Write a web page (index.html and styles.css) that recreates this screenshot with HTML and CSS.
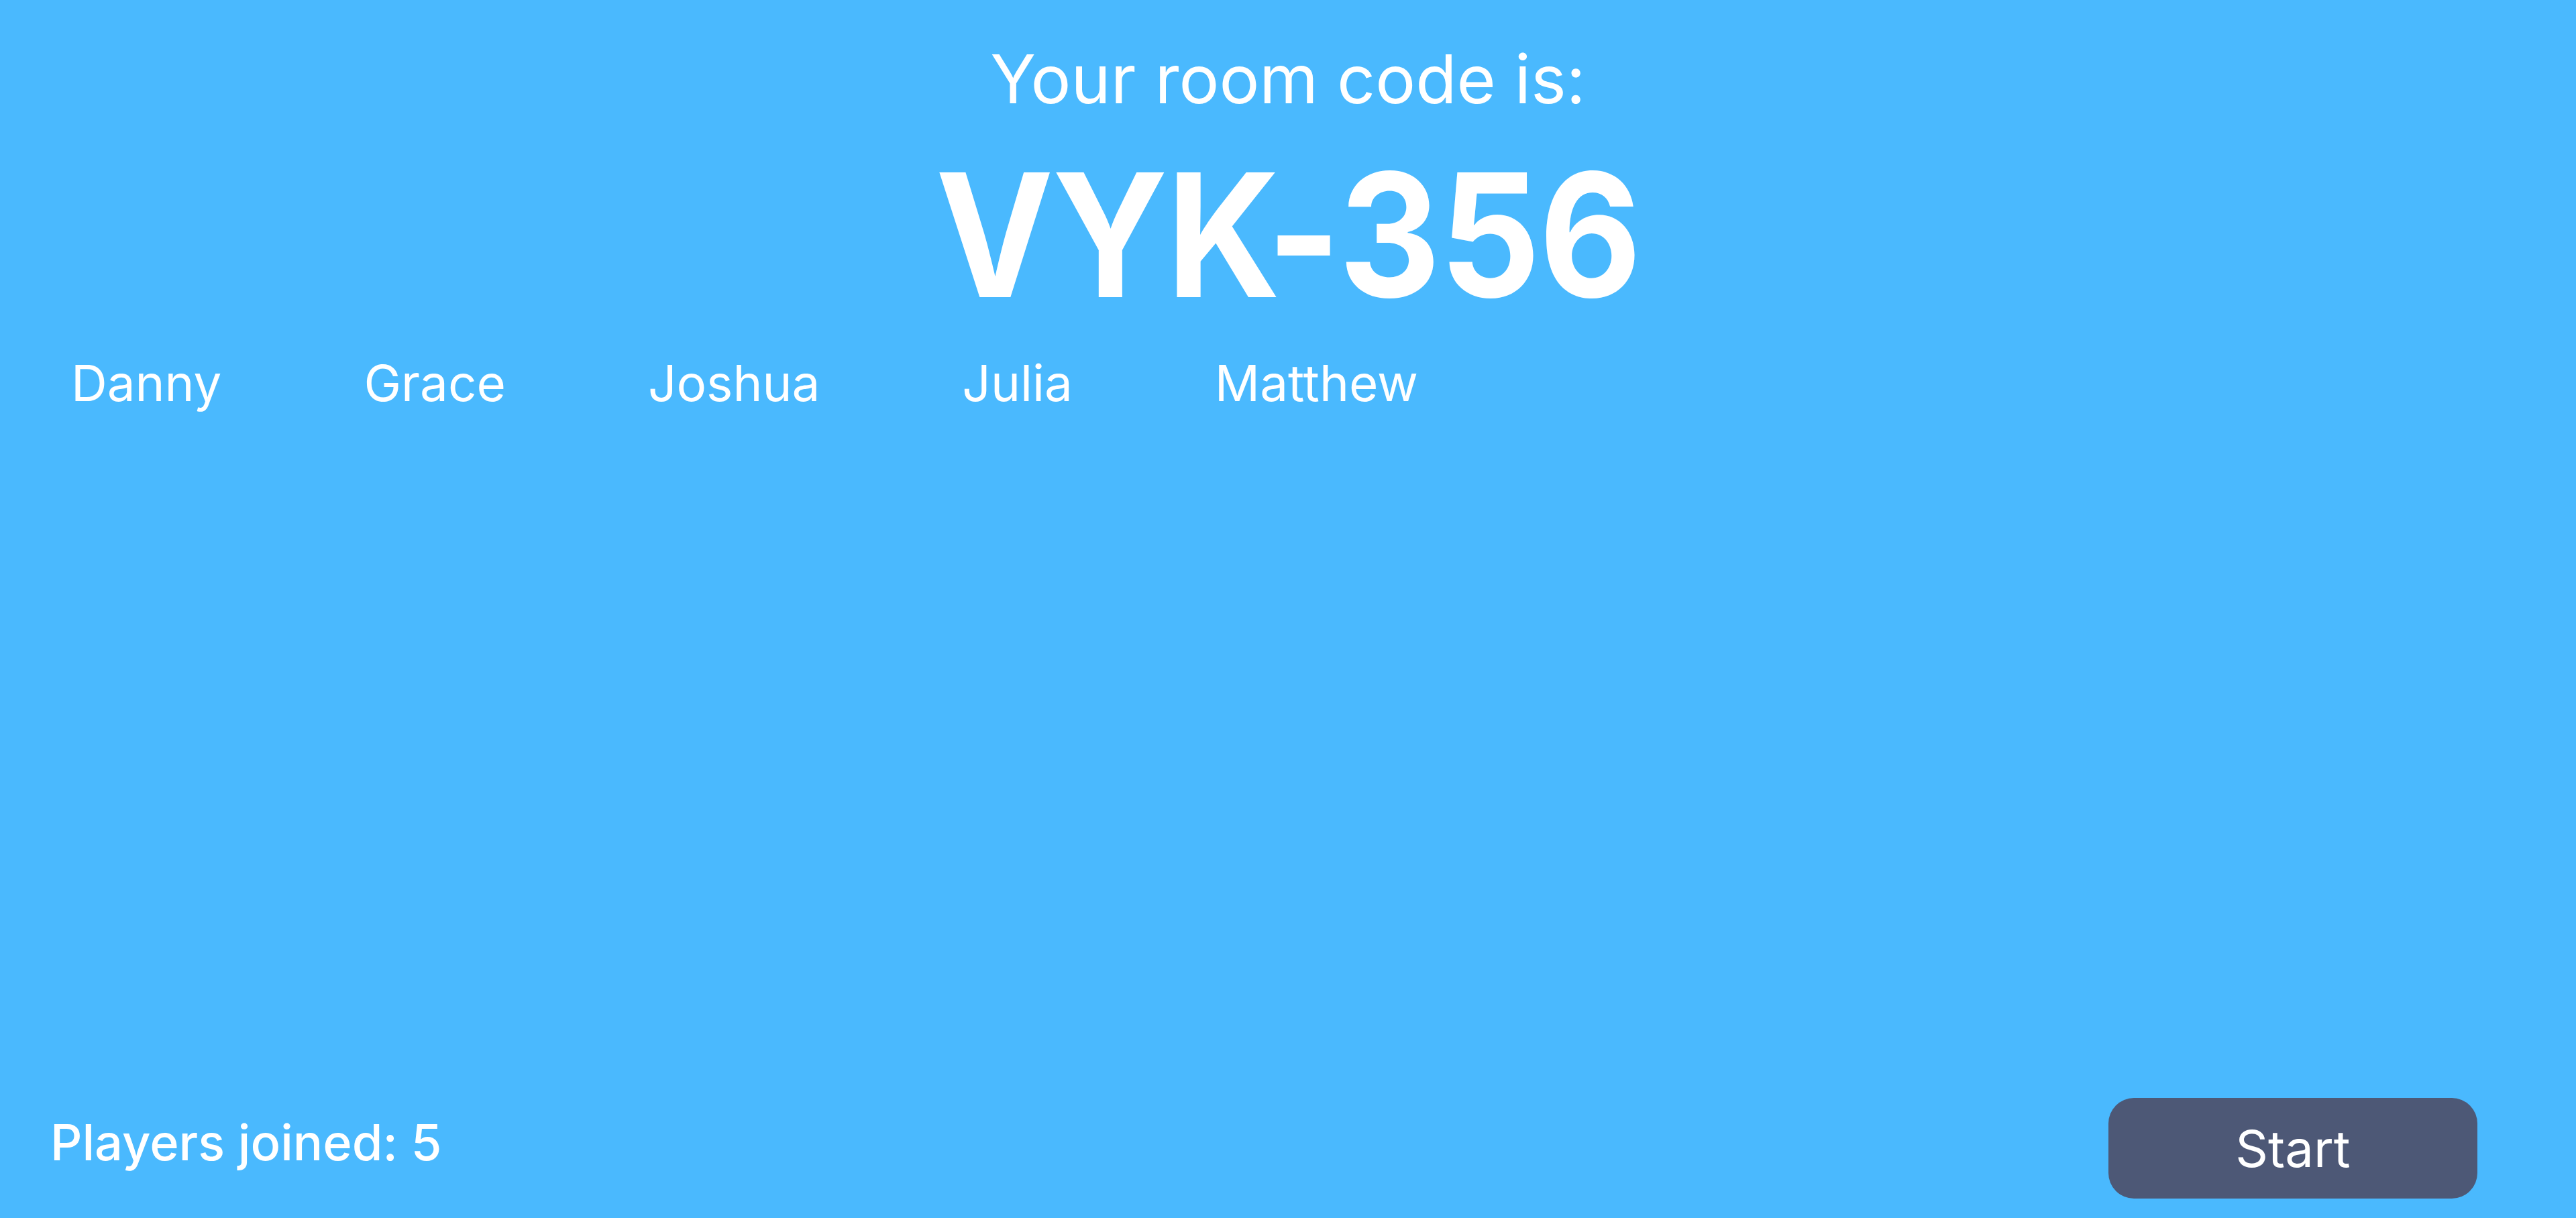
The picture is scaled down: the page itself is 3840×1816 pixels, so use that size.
FILE: index.html
```html
<!DOCTYPE html>
<html lang="en">
<head>
<meta charset="utf-8">
<title>Room</title>
<link rel="stylesheet" href="styles.css">
</head>
<body>
<main class="lobby">
  <header class="code-block">
    <h2 class="code-label">Your room code is:</h2>
    <h1 class="code">VYK-356</h1>
  </header>
  <ul class="players">
    <li class="player">Danny</li>
    <li class="player">Grace</li>
    <li class="player">Joshua</li>
    <li class="player">Julia</li>
    <li class="player">Matthew</li>
  </ul>
  <footer class="footer">
    <div class="count">Players joined: 5</div>
    <button class="start">Start</button>
  </footer>
</main>
</body>
</html>
```

FILE: styles.css
```css
html, body {
  margin: 0;
  padding: 0;
}
body {
  background: #4ab9fe;
  color: #ffffff;
  font-family: Inter, "Noto Sans", sans-serif;
}
.lobby {
  display: flex;
  flex-direction: column;
  min-height: 100vh;
  box-sizing: border-box;
}
.code-block {
  display: flex;
  flex-direction: column;
  align-items: center;
}
.code-label {
  margin: 58px 0 0;
  font-size: 100px;
  line-height: 120px;
  font-weight: 400;
}
.code {
  margin: 44px 0 0;
  font-size: 256px;
  line-height: 256px;
  font-weight: 700;
  letter-spacing: -2px;
  transform: scaleX(0.92);
}
.players {
  list-style: none;
  margin: 55px 0 0;
  padding: 0 0 0 106px;
  display: flex;
  gap: 212px;
}
.player {
  font-size: 74.5px;
  line-height: 76px;
  font-weight: 400;
}
.footer {
  margin-top: auto;
  display: flex;
  justify-content: space-between;
  align-items: flex-end;
  padding: 0 147px 29px 75px;
}
.count {
  font-size: 74px;
  line-height: 74px;
  font-weight: 500;
  margin-bottom: 47px;
}
.start {
  width: 550px;
  height: 150px;
  border: none;
  border-radius: 38px;
  background: #4d5876;
  color: #ffffff;
  font-family: Inter, "Noto Sans", sans-serif;
  font-size: 76px;
  font-weight: 400;
  padding: 0;
}
```
